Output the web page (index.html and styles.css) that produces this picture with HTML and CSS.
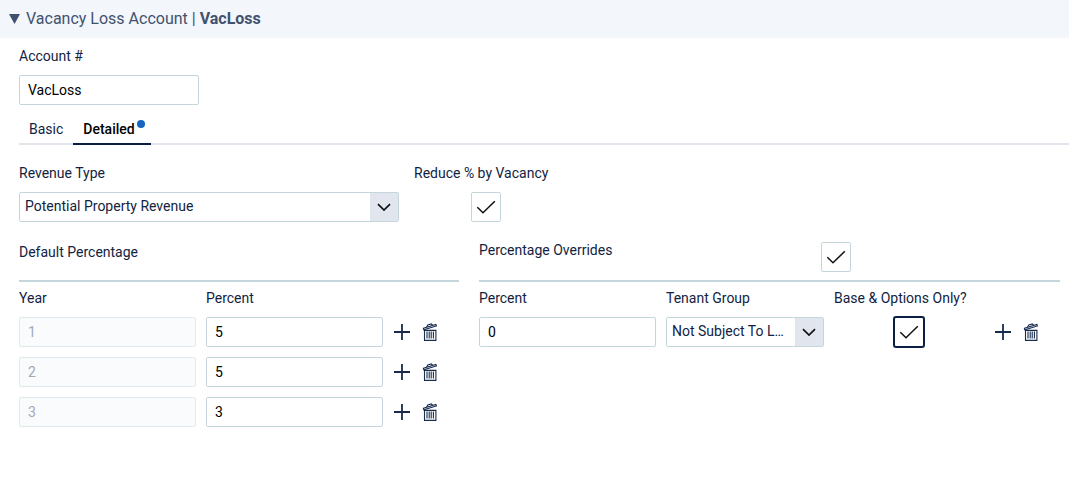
FILE: index.html
```html
<!DOCTYPE html>
<html lang="en">
<head>
  <meta charset="UTF-8">
  <title>Vacancy Loss Account</title>
  <link rel="stylesheet" href="styles.css">
</head>
<body>

  <!-- icons shared by the table rows -->
  <svg class="sprite" aria-hidden="true">
    <symbol id="icon-plus" viewBox="0 0 18 18">
      <path d="M1 9H17M9 1V17" fill="none" stroke="currentColor" stroke-width="1.8"/>
    </symbol>
    <symbol id="icon-trash" viewBox="0 0 18 18">
      <g fill="none" stroke="currentColor" stroke-width="1.1">
        <path d="M3.5 7.4H14.9V17.4H3.5Z"/>
        <path d="M6 8.5V15.6M8.2 8.5V15.6M10.2 8.5V15.6M12.4 8.5V15.6"/>
        <path d="M2.4 5.3L14.9 1.5L15.4 3L2.8 6.8Z"/>
        <path d="M5.6 4L6.8 2L10.3 .9L11.6 2.2"/>
      </g>
    </symbol>
  </svg>

  <details class="panel" open>
    <summary class="panel-title">
      <svg class="caret" viewBox="0 0 11 10" aria-hidden="true"><path d="M0 0H11L5.5 10Z" fill="currentColor"/></svg>
      <span>Vacancy Loss Account | <strong>VacLoss</strong></span>
    </summary>

    <div class="content">
      <div class="field account">
        <label for="account">Account #</label>
        <input id="account" class="text-input" type="text" value="VacLoss">
      </div>

      <div class="tabs" role="tablist">
        <button class="tab" type="button" role="tab" aria-selected="false">Basic</button>
        <button class="tab active" type="button" role="tab" aria-selected="true">Detailed<span class="dot"></span></button>
      </div>

      <div class="options">
        <div class="field revenue">
          <label for="revenueType">Revenue Type</label>
          <select id="revenueType" class="dropdown">
            <option>Potential Property Revenue</option>
          </select>
        </div>
        <div class="field reduce">
          <label for="reduce">Reduce % by Vacancy</label>
          <input id="reduce" class="check" type="checkbox" checked>
        </div>
      </div>

      <div class="sections">
        <section class="defaults">
          <div class="section-head">
            <span>Default Percentage</span>
          </div>
          <table>
            <thead>
              <tr>
                <th id="year">Year</th>
                <th id="percent">Percent</th>
                <td class="actions-col"></td>
              </tr>
            </thead>
            <tbody>
              <tr>
                <td><input class="text-input" type="text" value="1" aria-labelledby="year" disabled></td>
                <td><input class="text-input" type="text" value="5" aria-labelledby="percent"></td>
                <td><div class="actions">
                  <button type="button" aria-label="Add row"><svg><use href="#icon-plus"/></svg></button>
                  <button type="button" aria-label="Delete row"><svg><use href="#icon-trash"/></svg></button>
                </div></td>
              </tr>
              <tr>
                <td><input class="text-input" type="text" value="2" aria-labelledby="year" disabled></td>
                <td><input class="text-input" type="text" value="5" aria-labelledby="percent"></td>
                <td><div class="actions">
                  <button type="button" aria-label="Add row"><svg><use href="#icon-plus"/></svg></button>
                  <button type="button" aria-label="Delete row"><svg><use href="#icon-trash"/></svg></button>
                </div></td>
              </tr>
              <tr>
                <td><input class="text-input" type="text" value="3" aria-labelledby="year" disabled></td>
                <td><input class="text-input" type="text" value="3" aria-labelledby="percent"></td>
                <td><div class="actions">
                  <button type="button" aria-label="Add row"><svg><use href="#icon-plus"/></svg></button>
                  <button type="button" aria-label="Delete row"><svg><use href="#icon-trash"/></svg></button>
                </div></td>
              </tr>
            </tbody>
          </table>
        </section>

        <section class="overrides">
          <div class="section-head">
            <label for="overrides">Percentage Overrides</label>
            <div class="head-check"><input id="overrides" class="check" type="checkbox" checked></div>
          </div>
          <table>
            <thead>
              <tr>
                <th id="overridePercent">Percent</th>
                <th id="tenantGroup" class="tenant-col">Tenant Group</th>
                <th id="baseOnly" class="base-col">Base &amp; Options Only?</th>
                <td class="actions-col"></td>
              </tr>
            </thead>
            <tbody>
              <tr>
                <td><input class="text-input" type="text" value="0" aria-labelledby="overridePercent"></td>
                <td>
                  <select class="dropdown" aria-labelledby="tenantGroup">
                    <option>Not Subject To Loss</option>
                  </select>
                </td>
                <td><input class="check current" type="checkbox" aria-labelledby="baseOnly" checked></td>
                <td><div class="actions">
                  <button type="button" aria-label="Add row"><svg><use href="#icon-plus"/></svg></button>
                  <button type="button" aria-label="Delete row"><svg><use href="#icon-trash"/></svg></button>
                </div></td>
              </tr>
            </tbody>
          </table>
        </section>
      </div>
    </div>
  </details>

</body>
</html>
```
FILE: styles.css
```css
* {
  box-sizing: border-box;
}

body {
  margin: 0;
  background: #fff;
  color: #12233f;
  font-family: Roboto, sans-serif;
  font-size: 14px;
  line-height: 20px;
}

input, select, button {
  font: inherit;
  margin: 0;
}

.sprite {
  display: none;
}

.panel-title {
  display: flex;
  align-items: center;
  gap: 6px;
  height: 38px;
  padding: 0 9px;
  background: #f3f6fb;
  color: #42526e;
  font-size: 16px;
  list-style: none;
  cursor: pointer;
}

.caret {
  width: 11px;
  height: 10px;
}

.content {
  padding: 8px 0 0 19px;
}

.field {
  display: flex;
  flex-direction: column;
  gap: 9px;
}

.account {
  width: 180px;
}

.text-input {
  display: block;
  width: 100%;
  height: 30px;
  padding: 0 8px;
  border: 1px solid #c5d5dc;
  border-radius: 2px;
  background: #fff;
  color: #000;
}

.text-input:disabled {
  border-color: #e2eaed;
  background: #fafbfd;
  color: #a0a9b8;
}

/* Tabs */
.tabs {
  display: flex;
  margin-top: 10px;
  box-shadow: inset 0 -2px #e1e5ec;
}

.tab {
  display: flex;
  height: 30px;
  padding: 4px 10px;
  border: none;
  border-bottom: 2px solid transparent;
  background: none;
  color: #12233f;
  cursor: pointer;
}

.tab.active {
  padding-right: 6px;
  border-color: #091e42;
  color: #000;
  font-weight: 500;
}

.dot {
  width: 8px;
  height: 8px;
  margin: 1px 0 0 2px;
  border-radius: 50%;
  background: #1565c0;
}

.options {
  display: flex;
  gap: 15px;
  margin-top: 18px;
}

.revenue {
  width: 380px;
}

.reduce {
  width: 144px;
}

.dropdown {
  display: block;
  width: 100%;
  height: 30px;
  padding: 0 34px 2px 5px;
  border: 1px solid #c5d5dc;
  border-radius: 2px;
  appearance: none;
  background: #fff url("data:image/svg+xml,%3Csvg xmlns='http://www.w3.org/2000/svg' width='28' height='28'%3E%3Cpath fill='%23e1e6ee' d='M0 0H28V28H0Z'/%3E%3Cpath d='M8 11.2L14 17L20 11.2' fill='none' stroke='%23111' stroke-width='1.7'/%3E%3C/svg%3E") no-repeat right center;
  color: #12233f;
  text-overflow: ellipsis;
}

.check {
  display: block;
  width: 30px;
  height: 30px;
  margin: 0 auto;
  border: 1px solid #c5d5dc;
  border-radius: 2px;
  appearance: none;
  background: #fff;
}

.check:checked {
  background: #fff url("data:image/svg+xml,%3Csvg xmlns='http://www.w3.org/2000/svg' width='28' height='28'%3E%3Cpath d='M5.3 14.3L11 19.8L22.8 8.3' fill='none' stroke='%23111' stroke-width='1.5'/%3E%3C/svg%3E") no-repeat center;
}

.check.current {
  border-color: #091e42;
  box-shadow: 0 0 0 1px #091e42;
}

/* Percentage tables */
.sections {
  display: flex;
  gap: 20px;
  margin: 20px 9px 0 0;
}

.defaults {
  flex: 440 1 0;
}

.overrides {
  flex: 581 1 0;
}

.section-head {
  display: flex;
  align-items: flex-start;
  height: 40px;
  border-bottom: 2px solid #c5d5dc;
}

.section-head label {
  line-height: 16px;
}

.head-check {
  flex: 1;
}

table {
  width: 100%;
  margin-top: 6px;
  border-collapse: collapse;
  table-layout: fixed;
}

th {
  padding: 0 0 9px;
  font-weight: normal;
  text-align: left;
  white-space: nowrap;
}

td {
  padding: 0 10px 10px 0;
}

.tenant-col {
  width: 168px;
}

.base-col {
  width: 160px;
}

.actions-col {
  width: 66px;
}

td:last-child {
  padding-right: 0;
}

.actions {
  display: flex;
  gap: 10px;
}

.actions button {
  width: 18px;
  height: 18px;
  padding: 0;
  border: none;
  background: none;
  color: #172b4d;
  cursor: pointer;
}

.actions svg {
  display: block;
  width: 18px;
  height: 18px;
}
```
